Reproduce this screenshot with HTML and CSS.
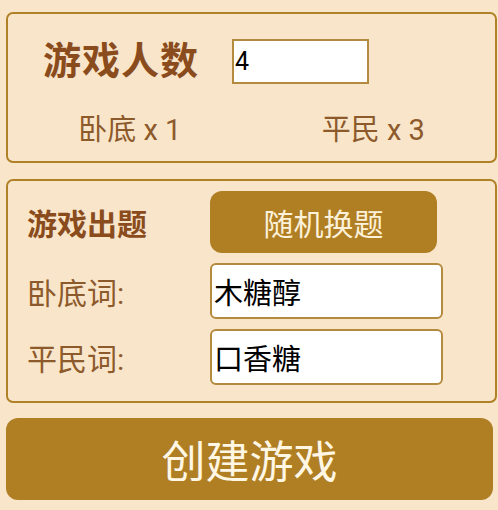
FILE: index.html
```html
<!DOCTYPE html>
<html lang="zh">

<head>
    <meta charset="UTF-8">
    <meta name="viewport" content="width=device-width, initial-scale=1.0">
    <title>谁是卧底</title>
    <link rel="stylesheet" href="styles.css">
</head>

<body>
    <div class="page">
        <div class="panel players">
            <div class="players-row">
                <span class="title">游戏人数</span>
                <input type="text" class="count-input" value="4">
            </div>
            <div class="roles">
                <span>卧底 x 1</span>
                <span>平民 x 3</span>
            </div>
        </div>

        <div class="panel words">
            <span class="sub-title">游戏出题</span>
            <button class="random-button">随机换题</button>
            <span class="word-label">卧底词:</span>
            <input type="text" class="word-input" value="木糖醇">
            <span class="word-label">平民词:</span>
            <input type="text" class="word-input" value="口香糖">
        </div>

        <button class="create-button">创建游戏</button>
    </div>
</body>

</html>
```

FILE: styles.css
```css
body {
    margin: 0;
    font-family: Roboto, "Noto Sans CJK SC", sans-serif;
    background-color: #f9e6ca;
}

.page {
    padding: 12px 0 0 6px;
}

.panel {
    box-sizing: border-box;
    width: 491px;
    border: 2px solid #b08127;
    border-radius: 7px;
}

.players {
    height: 151px;
    padding-top: 25px;
}

.players-row {
    display: flex;
    align-items: center;
    padding-left: 35px;
}

.title {
    width: 189px;
    font-size: 38px;
    font-weight: bold;
    line-height: 45px;
    letter-spacing: 1px;
    color: #8a4c1d;
}

.count-input {
    box-sizing: border-box;
    width: 137px;
    height: 45px;
    border: 2px solid #b38a3e;
    padding: 0 1px;
    font-family: Roboto, sans-serif;
    font-size: 25px;
    color: #000;
    background: white;
    outline: none;
}

.roles {
    display: grid;
    grid-template-columns: 1fr 1fr;
    margin-top: 29px;
    text-align: center;
    font-size: 29px;
    line-height: 34px;
    color: #8d5a2c;
}

.words {
    display: grid;
    grid-template-columns: 183px 233px;
    grid-template-rows: 62px 56px 56px;
    row-gap: 10px;
    align-items: center;
    margin-top: 16px;
    padding: 10px 0 16px 19px;
}

.sub-title {
    font-size: 30px;
    font-weight: bold;
    color: #8a4c1d;
}

.word-label {
    font-size: 30px;
    color: #8d5a2c;
}

.random-button {
    width: 227px;
    height: 62px;
    border: none;
    border-radius: 12px;
    background-color: #b07f24;
    color: #fdf1da;
    font-family: inherit;
    font-size: 30px;
}

.word-input {
    box-sizing: border-box;
    width: 233px;
    height: 56px;
    border: 2px solid #b38a3e;
    border-radius: 6px;
    padding: 0 2px;
    font-family: inherit;
    font-size: 29px;
    color: #000;
    background: white;
    outline: none;
}

.create-button {
    display: block;
    width: 487px;
    height: 82px;
    margin-top: 15px;
    border: none;
    border-radius: 12px;
    background-color: #b07f24;
    color: #fff6e4;
    font-family: inherit;
    font-size: 44px;
}
```
